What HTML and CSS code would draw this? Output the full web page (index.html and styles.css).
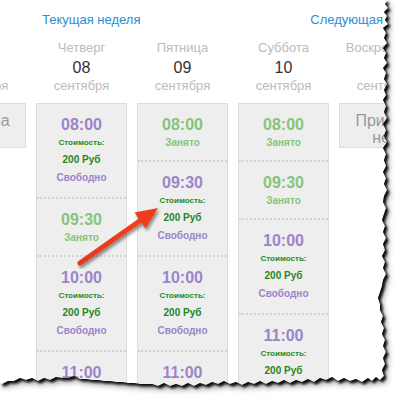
FILE: index.html
```html
<!DOCTYPE html>
<html lang="ru">
<head>
    <meta charset="UTF-8">
    <meta name="viewport" content="width=device-width, initial-scale=1.0">
    <title>Запись</title>
    <link rel="stylesheet" href="styles.css">
</head>
<body>

    <div class="page">
        <div class="nav">
            <a href="#" class="nav-link">Текущая неделя</a>
            <a href="#" class="nav-link next">Следующая</a>
        </div>

        <div class="week">
            <div class="day">
                <div class="day-head">
                    <div class="day-name">Среда</div>
                    <div class="day-num">07</div>
                    <div class="day-month">сентября</div>
                </div>
                <div class="closed">Приема<br>нет</div>
            </div>

            <div class="day">
                <div class="day-head">
                    <div class="day-name">Четверг</div>
                    <div class="day-num">08</div>
                    <div class="day-month">сентября</div>
                </div>
                <div class="slots">
                    <div class="slot">
                        <div class="time">08:00</div>
                        <div class="price-label">Стоимость:</div>
                        <div class="price">200 Руб</div>
                        <div class="status">Свободно</div>
                    </div>
                    <div class="slot slot-busy">
                        <div class="time">09:30</div>
                        <div class="status">Занято</div>
                    </div>
                    <div class="slot">
                        <div class="time">10:00</div>
                        <div class="price-label">Стоимость:</div>
                        <div class="price">200 Руб</div>
                        <div class="status">Свободно</div>
                    </div>
                    <div class="slot">
                        <div class="time">11:00</div>
                        <div class="price-label">Стоимость:</div>
                        <div class="price">200 Руб</div>
                        <div class="status">Свободно</div>
                    </div>
                </div>
            </div>

            <div class="day">
                <div class="day-head">
                    <div class="day-name">Пятница</div>
                    <div class="day-num">09</div>
                    <div class="day-month">сентября</div>
                </div>
                <div class="slots">
                    <div class="slot slot-busy">
                        <div class="time">08:00</div>
                        <div class="status">Занято</div>
                    </div>
                    <div class="slot">
                        <div class="time">09:30</div>
                        <div class="price-label">Стоимость:</div>
                        <div class="price">200 Руб</div>
                        <div class="status">Свободно</div>
                    </div>
                    <div class="slot">
                        <div class="time">10:00</div>
                        <div class="price-label">Стоимость:</div>
                        <div class="price">200 Руб</div>
                        <div class="status">Свободно</div>
                    </div>
                    <div class="slot">
                        <div class="time">11:00</div>
                        <div class="price-label">Стоимость:</div>
                        <div class="price">200 Руб</div>
                        <div class="status">Свободно</div>
                    </div>
                </div>
            </div>

            <div class="day">
                <div class="day-head">
                    <div class="day-name">Суббота</div>
                    <div class="day-num">10</div>
                    <div class="day-month">сентября</div>
                </div>
                <div class="slots">
                    <div class="slot slot-busy">
                        <div class="time">08:00</div>
                        <div class="status">Занято</div>
                    </div>
                    <div class="slot slot-busy">
                        <div class="time">09:30</div>
                        <div class="status">Занято</div>
                    </div>
                    <div class="slot">
                        <div class="time">10:00</div>
                        <div class="price-label">Стоимость:</div>
                        <div class="price">200 Руб</div>
                        <div class="status">Свободно</div>
                    </div>
                    <div class="slot">
                        <div class="time">11:00</div>
                        <div class="price-label">Стоимость:</div>
                        <div class="price">200 Руб</div>
                        <div class="status">Свободно</div>
                    </div>
                </div>
            </div>

            <div class="day">
                <div class="day-head">
                    <div class="day-name">Воскресенье</div>
                    <div class="day-num">&nbsp;</div>
                    <div class="day-month">сентября</div>
                </div>
                <div class="closed">Приема<br>нет</div>
            </div>
        </div>

        <!-- стрелка и рваный край поверх скриншота -->
        <svg class="overlay" width="399" height="397" viewBox="0 0 399 397">
            <defs>
                <clipPath id="outside">
                    <path d="M387 0L385 4L388 8L384 12L387 16L385 20L388 24L383 28L386 33L384 38L387 43L383 48L386 53L384 58L387 63L383 68L386 73L384 79L387 84L384 90L386 95L383 100L386 106L384 112L387 118L383 124L386 130L384 136L387 142L383 148L386 154L384 160L386 166L383 172L386 178L384 184L387 190L384 196L383 202L386 208L384 214L382 220L385 226L383 232L386 238L383 244L385 250L382 256L385 262L383 268L386 274L383 280L382 286L380 292L378 298L380 304L380 310L383 316L381 322L384 328L382 334L385 340L383 346L386 352L383 358L385 364L382 370L384 376L380 380L376 377L372 381L368 378L362 382L356 379L350 381L344 378L338 381L332 377L326 380L320 378L314 382L308 379L302 382L296 380L290 383L284 380L278 383L272 381L266 384L260 381L254 384L248 382L242 385L236 382L230 384L224 381L218 384L212 382L206 385L200 383L194 386L188 383L182 386L176 384L170 386L164 383L158 386L152 384L146 384L140 384L134 383L128 383L122 382L116 382L110 381L104 381L98 380L92 380L86 379L80 379L74 376L68 378L62 378L56 377L50 380L44 378L38 381L32 378L26 380L20 378L14 381L8 381L2 384L0 383L0 397L399 397L399 0Z"/>
                </clipPath>
                <filter id="soft"><feGaussianBlur stdDeviation="1.2"/></filter>
                <filter id="wide"><feGaussianBlur stdDeviation="3"/></filter>
                <filter id="arrow-shadow">
                    <feDropShadow dx="1.5" dy="2.5" stdDeviation="1.5" flood-color="#000" flood-opacity="0.45"/>
                </filter>
                <linearGradient id="arrow-fill" x1="0" y1="1" x2="1" y2="0">
                    <stop offset="0" stop-color="#e23a1c"/>
                    <stop offset="1" stop-color="#f2401f"/>
                </linearGradient>
            </defs>

            <g filter="url(#arrow-shadow)">
                <line x1="80" y1="263" x2="141" y2="220" stroke="url(#arrow-fill)" stroke-width="5" stroke-linecap="round"/>
                <polygon points="158,208 145.5,228.5 134.5,212.5" fill="#ef3e1e"/>
            </g>

            <path fill="#fff" d="M387 0L385 4L388 8L384 12L387 16L385 20L388 24L383 28L386 33L384 38L387 43L383 48L386 53L384 58L387 63L383 68L386 73L384 79L387 84L384 90L386 95L383 100L386 106L384 112L387 118L383 124L386 130L384 136L387 142L383 148L386 154L384 160L386 166L383 172L386 178L384 184L387 190L384 196L383 202L386 208L384 214L382 220L385 226L383 232L386 238L383 244L385 250L382 256L385 262L383 268L386 274L383 280L382 286L380 292L378 298L380 304L380 310L383 316L381 322L384 328L382 334L385 340L383 346L386 352L383 358L385 364L382 370L384 376L380 380L376 377L372 381L368 378L362 382L356 379L350 381L344 378L338 381L332 377L326 380L320 378L314 382L308 379L302 382L296 380L290 383L284 380L278 383L272 381L266 384L260 381L254 384L248 382L242 385L236 382L230 384L224 381L218 384L212 382L206 385L200 383L194 386L188 383L182 386L176 384L170 386L164 383L158 386L152 384L146 384L140 384L134 383L128 383L122 382L116 382L110 381L104 381L98 380L92 380L86 379L80 379L74 376L68 378L62 378L56 377L50 380L44 378L38 381L32 378L26 380L20 378L14 381L8 381L2 384L0 383L0 397L399 397L399 0Z"/>

            <g clip-path="url(#outside)">
                <path fill="#000" opacity="0.45" filter="url(#wide)" transform="translate(3 4)" d="M0 0L387 0L385 4L388 8L384 12L387 16L385 20L388 24L383 28L386 33L384 38L387 43L383 48L386 53L384 58L387 63L383 68L386 73L384 79L387 84L384 90L386 95L383 100L386 106L384 112L387 118L383 124L386 130L384 136L387 142L383 148L386 154L384 160L386 166L383 172L386 178L384 184L387 190L384 196L383 202L386 208L384 214L382 220L385 226L383 232L386 238L383 244L385 250L382 256L385 262L383 268L386 274L383 280L382 286L380 292L378 298L380 304L380 310L383 316L381 322L384 328L382 334L385 340L383 346L386 352L383 358L385 364L382 370L384 376L380 380L376 377L372 381L368 378L362 382L356 379L350 381L344 378L338 381L332 377L326 380L320 378L314 382L308 379L302 382L296 380L290 383L284 380L278 383L272 381L266 384L260 381L254 384L248 382L242 385L236 382L230 384L224 381L218 384L212 382L206 385L200 383L194 386L188 383L182 386L176 384L170 386L164 383L158 386L152 384L146 384L140 384L134 383L128 383L122 382L116 382L110 381L104 381L98 380L92 380L86 379L80 379L74 376L68 378L62 378L56 377L50 380L44 378L38 381L32 378L26 380L20 378L14 381L8 381L2 384L0 383Z"/>
                <path fill="#111" filter="url(#soft)" transform="translate(2.5 2.5)" d="M0 0L387 0L385 4L388 8L384 12L387 16L385 20L388 24L383 28L386 33L384 38L387 43L383 48L386 53L384 58L387 63L383 68L386 73L384 79L387 84L384 90L386 95L383 100L386 106L384 112L387 118L383 124L386 130L384 136L387 142L383 148L386 154L384 160L386 166L383 172L386 178L384 184L387 190L384 196L383 202L386 208L384 214L382 220L385 226L383 232L386 238L383 244L385 250L382 256L385 262L383 268L386 274L383 280L382 286L380 292L378 298L380 304L380 310L383 316L381 322L384 328L382 334L385 340L383 346L386 352L383 358L385 364L382 370L384 376L380 380L376 377L372 381L368 378L362 382L356 379L350 381L344 378L338 381L332 377L326 380L320 378L314 382L308 379L302 382L296 380L290 383L284 380L278 383L272 381L266 384L260 381L254 384L248 382L242 385L236 382L230 384L224 381L218 384L212 382L206 385L200 383L194 386L188 383L182 386L176 384L170 386L164 383L158 386L152 384L146 384L140 384L134 383L128 383L122 382L116 382L110 381L104 381L98 380L92 380L86 379L80 379L74 376L68 378L62 378L56 377L50 380L44 378L38 381L32 378L26 380L20 378L14 381L8 381L2 384L0 383Z"/>
            </g>
        </svg>
    </div>

</body>
</html>
```

FILE: styles.css
```css
*{
    padding: 0;
    margin: 0;
    box-sizing: border-box;
}

body{
    background-color: #fff;
    font-family: "Liberation Sans", Arial, sans-serif;
}

.page{
    position: relative;
    width: 399px;
    height: 397px;
    overflow: hidden;
}

.nav{
    display: flex;
    padding: 12px 16px 0 42px;
    margin-bottom: 12px;
    font-size: 13px;
    line-height: 16px;
}

.nav-link{
    color: rgb(43, 142, 211);
    text-decoration: none;
}

.nav-link.next{
    margin-left: auto;
}

.week{
    display: flex;
    gap: 10px;
    margin-left: -65px;
}

.day{
    flex: 0 0 91px;
    width: 91px;
}

.day-head{
    text-align: center;
    padding-bottom: 11px;
    white-space: nowrap;
}

.day-name{
    font-size: 13px;
    line-height: 16px;
    color: #bbb;
}

.day-num{
    font-size: 16px;
    line-height: 24px;
    color: #333;
}

.day-month{
    font-size: 13px;
    line-height: 12px;
    color: #bbb;
}

.slots{
    border: 1px solid #ddd;
    background-color: #eee;
}

.slot{
    padding: 11px 0 10px;
    text-align: center;
    font-weight: bold;
}

.slot + .slot{
    border-top: 2px dotted #d3d3d3;
}

.time{
    font-size: 16px;
    line-height: 20px;
    color: rgb(156, 132, 201);
}

.price-label{
    font-size: 8px;
    line-height: 16px;
    color: rgb(35, 140, 35);
}

.price{
    font-size: 10px;
    line-height: 18px;
    color: rgb(30, 135, 30);
}

.status{
    font-size: 10px;
    line-height: 18px;
    color: rgb(156, 132, 201);
}

.slot-busy{
    padding-bottom: 9px;
}

.slot-busy .time,
.slot-busy .status{
    color: rgb(134, 196, 122);
}

.slot-busy .status{
    line-height: 16px;
}

.closed{
    border: 1px solid #ddd;
    background-color: #eee;
    padding: 8px 0 1px;
    text-align: center;
    font-size: 16px;
    line-height: 17px;
    color: #999;
}

.overlay{
    position: absolute;
    left: 0;
    top: 0;
    pointer-events: none;
}
```
